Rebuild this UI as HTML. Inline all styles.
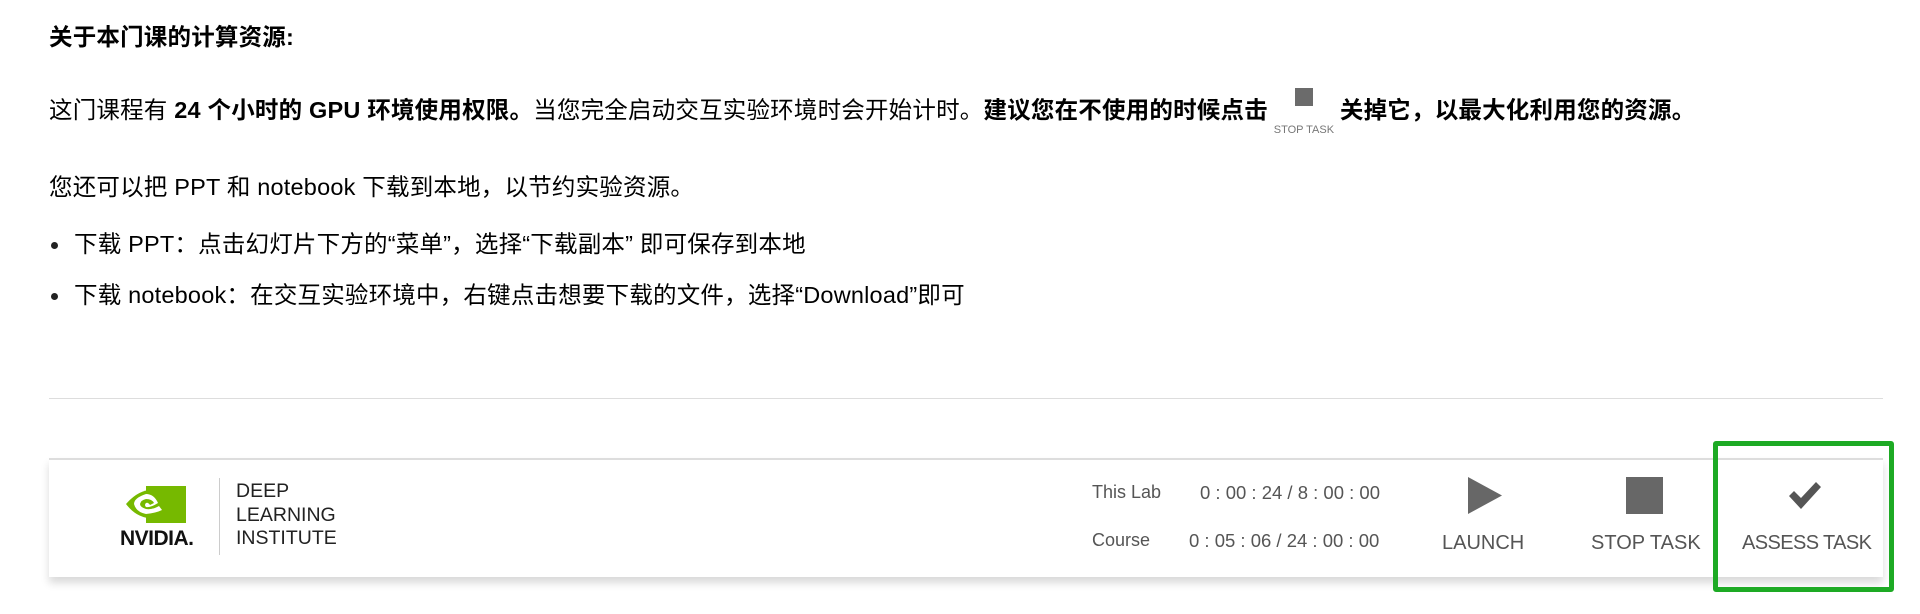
<!DOCTYPE html>
<html><head><meta charset="utf-8"><style>
body{margin:0;width:1920px;height:614px;background:#fff;overflow:hidden;font-family:"Liberation Sans","Noto Sans CJK SC",sans-serif;color:#000;position:relative}
.t{position:absolute;left:49px;font-size:23.5px;white-space:nowrap;line-height:30px;letter-spacing:0.2px}
b{font-weight:bold}
.ic{display:inline-block;position:relative;width:62px;height:20px;vertical-align:middle;margin:0 5px}
.ic i{position:absolute;left:22px;top:-14px;width:18px;height:18px;background:#6b6b6b}
.ic span{position:absolute;left:0;top:13px;font-size:11px;color:#777;width:62px;text-align:center;letter-spacing:0}
.dot{display:inline-block;width:7px;height:7px;border-radius:50%;background:#222;vertical-align:middle;margin-right:16px;margin-left:2px}
.hr{position:absolute;left:49px;width:1834px;top:398px;height:1px;background:#ddd}
.foot{position:absolute;left:49px;width:1834px;top:458px;height:117px;border-top:2px solid #ddd;background:#fff;box-shadow:0 6px 8px rgba(0,0,0,0.15)}
.a{position:absolute;white-space:nowrap;color:#555}
.green{position:absolute;left:1713px;top:441px;width:171px;height:141px;border:5px solid #1daa24;border-radius:3px}
</style></head><body>
<div class="t" style="top:22px"><b>关于本门课的计算资源:</b></div>
<div class="t" style="top:95px">这门课程有 <b>24 个小时的 GPU 环境使用权限。</b>当您完全启动交互实验环境时会开始计时。<b>建议您在不使用的时候点击</b><span class="ic"><i></i><span>STOP TASK</span></span><b>关掉它，以最大化利用您的资源。</b></div>
<div class="t" style="top:172px">您还可以把 PPT 和 notebook 下载到本地，以节约实验资源。</div>
<div class="t" style="top:229px"><span class="dot"></span>下载 PPT：点击幻灯片下方的“菜单”，选择“下载副本” 即可保存到本地</div>
<div class="t" style="top:280px"><span class="dot"></span>下载 notebook：在交互实验环境中，右键点击想要下载的文件，选择“Download”即可</div>
<div class="hr"></div>
<div class="foot"></div>
<svg style="position:absolute;left:126px;top:486px" width="60" height="37" viewBox="0 0 60 37">
<rect x="20" y="0" width="40" height="37" fill="#76b900"/>
<path d="M0 18 Q14 2 30 4 L30 32 Q12 34 0 18Z" fill="#76b900"/>
<path d="M20 8 Q8 12 8 18 Q10 26 20 28 Q30 27 36 24 L33 20 Q26 24 20 23 Q14 21 14 18 Q15 14 20 13 Q26 13 28 17 L24 19 Q22 16 20 17 Q18 19 20 21 Q24 22 32 17 Q28 8 20 8Z" fill="#fff"/>
</svg>
<div class="a" style="left:120px;top:527px;font-size:21px;font-weight:bold;color:#111;letter-spacing:-0.5px">NVIDIA.</div>
<div style="position:absolute;left:219px;top:478px;width:1px;height:77px;background:#ccc"></div>
<div class="a" style="left:236px;top:480px;font-size:19.5px;line-height:23.5px;color:#222">DEEP<br>LEARNING<br>INSTITUTE</div>
<div class="a" style="left:1092px;top:482px;font-size:18px">This Lab</div>
<div class="a" style="left:1200px;top:482px;font-size:18.5px">0 : 00 : 24 / 8 : 00 : 00</div>
<div class="a" style="left:1092px;top:530px;font-size:18px">Course</div>
<div class="a" style="left:1189px;top:530px;font-size:18.5px">0 : 05 : 06 / 24 : 00 : 00</div>
<svg style="position:absolute;left:1468px;top:477px" width="34" height="37"><path d="M0 0 L34 18.5 L0 37Z" fill="#676767"/></svg>
<div class="a" style="left:1442px;top:532px;font-size:20px">LAUNCH</div>
<div style="position:absolute;left:1626px;top:477px;width:37px;height:37px;background:#676767"></div>
<div class="a" style="left:1591px;top:532px;font-size:20px">STOP TASK</div>
<svg style="position:absolute;left:1789px;top:482px" width="32" height="28" viewBox="0 0 32 28"><path d="M0 14 L5 9 L12 16 L27 0 L32 5 L12 27Z" fill="#555"/></svg>
<div class="a" style="left:1742px;top:532px;font-size:20px;letter-spacing:-0.6px">ASSESS TASK</div>
<div class="green"></div>
</body></html>
